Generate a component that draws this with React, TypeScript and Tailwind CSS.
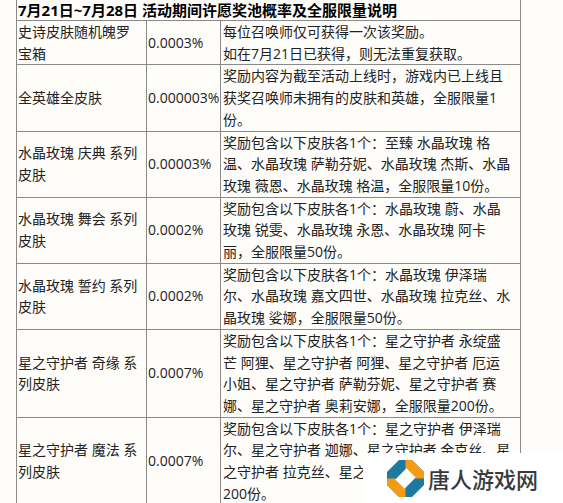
import React from 'react';

type Row = {
  name: string[];
  rate: string;
  desc: string[];
};

const rows: Row[] = [
  {
    name: ['史诗皮肤随机魄罗', '宝箱'],
    rate: '0.0003%',
    desc: ['每位召唤师仅可获得一次该奖励。', '如在7月21日已获得，则无法重复获取。'],
  },
  {
    name: ['全英雄全皮肤'],
    rate: '0.000003%',
    desc: ['奖励内容为截至活动上线时，游戏内已上线且', '获奖召唤师未拥有的皮肤和英雄，全服限量1', '份。'],
  },
  {
    name: ['水晶玫瑰 庆典 系列', '皮肤'],
    rate: '0.00003%',
    desc: [
      '奖励包含以下皮肤各1个：至臻 水晶玫瑰 格',
      '温、水晶玫瑰 萨勒芬妮、水晶玫瑰 杰斯、水晶',
      '玫瑰 薇恩、水晶玫瑰 格温，全服限量10份。',
    ],
  },
  {
    name: ['水晶玫瑰 舞会 系列', '皮肤'],
    rate: '0.0002%',
    desc: ['奖励包含以下皮肤各1个：水晶玫瑰 蔚、水晶', '玫瑰 锐雯、水晶玫瑰 永恩、水晶玫瑰 阿卡', '丽，全服限量50份。'],
  },
  {
    name: ['水晶玫瑰 誓约 系列', '皮肤'],
    rate: '0.0002%',
    desc: ['奖励包含以下皮肤各1个：水晶玫瑰 伊泽瑞', '尔、水晶玫瑰 嘉文四世、水晶玫瑰 拉克丝、水', '晶玫瑰 娑娜，全服限量50份。'],
  },
  {
    name: ['星之守护者 奇缘 系', '列皮肤'],
    rate: '0.0007%',
    desc: [
      '奖励包含以下皮肤各1个：星之守护者 永绽盛',
      '芒 阿狸、星之守护者 阿狸、星之守护者 厄运',
      '小姐、星之守护者 萨勒芬妮、星之守护者 赛',
      '娜、星之守护者 奥莉安娜，全服限量200份。',
    ],
  },
  {
    name: ['星之守护者 魔法 系', '列皮肤'],
    rate: '0.0007%',
    desc: [
      '奖励包含以下皮肤各1个：星之守护者 伊泽瑞',
      '尔、星之守护者 迦娜、星之守护者 金克丝、星',
      '之守护者 拉克丝、星之守护者 璐璐，全服限量',
      '200份。',
    ],
  },
];

function Lines({ lines }: { lines: string[] }) {
  return (
    <>
      {lines.map((l, i) => (
        <span key={i} className="block whitespace-nowrap">
          {l}
        </span>
      ))}
    </>
  );
}

function Logo() {
  return (
    <svg width="37" height="37" viewBox="0 0 40 40">
      <polygon points="13,0 27,0 40,13 40,27 27,40 13,40 0,27 0,13" fill="#1b7aa0" />
      <polygon points="20,0 27,0 40,13 40,20 31,20 20,9" fill="#f59b12" />
      <polygon points="20,40 13,40 0,27 0,20 9,20 20,31" fill="#f59b12" />
      <polygon points="21,9 31,19 19,31 9,21" fill="#ffffff" />
    </svg>
  );
}

export default function App() {
  return (
    <div className="relative w-[563px] h-[503px] overflow-hidden bg-[#fffdfa] font-['Open_Sans','Noto_Sans_CJK_SC',sans-serif] text-[#222]">
      <div className="ml-[16px] w-[505px] grid grid-cols-[129px_73px_299px] gap-px bg-[#8a8a8a] border-x border-b border-[#8a8a8a]">
        {/* 标题 */}
        <div className="col-span-3 h-[20px] bg-[#fffdfa] px-[1px] text-[15px] leading-[20px] font-bold text-black whitespace-nowrap">
          7月21日~7月28日 活动期间许愿奖池概率及全服限量说明
        </div>

        {rows.map((r, i) => (
          <React.Fragment key={i}>
            <div className="bg-[#fffdfa] px-[1px] flex flex-col justify-center text-[14px] leading-[21.7px]">
              <Lines lines={r.name} />
            </div>
            <div className="bg-[#fffdfa] px-[1px] flex items-center text-[14px] leading-[21.7px] whitespace-nowrap">
              {r.rate}
            </div>
            <div className="bg-[#fffdfa] px-[2px] text-[14px] leading-[21.7px]">
              <Lines lines={r.desc} />
            </div>
          </React.Fragment>
        ))}
      </div>

      {/* 水印 */}
      <div className="absolute left-[363px] top-[453px] right-0 bottom-0 bg-white flex items-center pl-[24px] gap-[4px]">
        <Logo />
        <span className="font-['Noto_Sans_CJK_SC',sans-serif] text-[22px] leading-[22px] font-medium text-[#3a3a3a] whitespace-nowrap">
          唐人游戏网
        </span>
      </div>
    </div>
  );
}
